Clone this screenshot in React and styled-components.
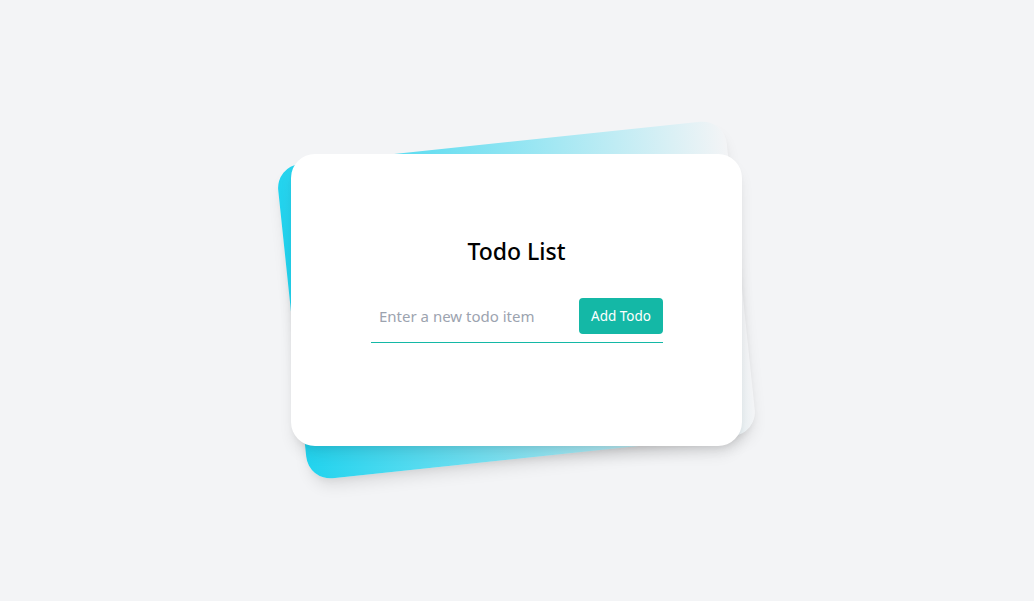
import React from "react";
import styled, { createGlobalStyle } from "styled-components";

const Global = createGlobalStyle`
  html, body { margin: 0; padding: 0; }
  body {
    background: #f3f4f6;
    font-family: "Noto Sans", "Open Sans", sans-serif;
  }
  * { box-sizing: border-box; }
`;

const Page = styled.div`
  min-height: 600px;
  padding-right: 1px;
  display: flex;
  align-items: center;
  justify-content: center;
`;

const Stack = styled.div`
  position: relative;
  width: 451px;
  padding: 12px 0;
`;

const BackCard = styled.div`
  position: absolute;
  inset: 0;
  border-radius: 24px;
  background: linear-gradient(to right, #22d3ee, rgba(34, 211, 238, 0));
  box-shadow: 0 10px 15px -3px rgba(0, 0, 0, 0.1), 0 4px 6px -2px rgba(0, 0, 0, 0.05);
  transform: rotate(-6deg);
`;

const Card = styled.div`
  position: relative;
  background: #ffffff;
  border-radius: 24px;
  height: 292px;
  padding-top: 81px;
  display: flex;
  flex-direction: column;
  align-items: center;
  box-shadow: 0 10px 15px -3px rgba(0, 0, 0, 0.1), 0 4px 6px -2px rgba(0, 0, 0, 0.05);
`;

const Title = styled.h1`
  margin: 0 0 23px;
  font-size: 23px;
  line-height: 32px;
  font-weight: 500;
  color: #000;
`;

const Form = styled.form`
  width: 292px;
  margin-left: 1px;
  display: flex;
  align-items: center;
  padding: 8px 0;
  border-bottom: 1px solid #14b8a6;
`;

const Input = styled.input`
  appearance: none;
  flex: 1;
  min-width: 0;
  border: none;
  background: transparent;
  margin-right: 12px;
  padding: 4px 8px;
  font-family: inherit;
  font-size: 15px;
  line-height: 1.25;
  color: #374151;
  outline: none;
  &::placeholder { color: #9ca3af; }
`;

const Button = styled.button`
  flex-shrink: 0;
  background: #14b8a6;
  border: 4px solid #14b8a6;
  border-radius: 4px;
  color: #fff;
  font-family: inherit;
  font-size: 13.5px;
  line-height: 20px;
  padding: 4px 8px;
  cursor: pointer;
`;

export default function App() {
  return (
    <>
      <Global />
      <Page>
        <Stack>
          <BackCard />
          <Card>
            <Title>Todo List</Title>
            <Form onSubmit={(e) => e.preventDefault()}>
              <Input type="text" placeholder="Enter a new todo item" />
              <Button type="submit">Add Todo</Button>
            </Form>
          </Card>
        </Stack>
      </Page>
    </>
  );
}
